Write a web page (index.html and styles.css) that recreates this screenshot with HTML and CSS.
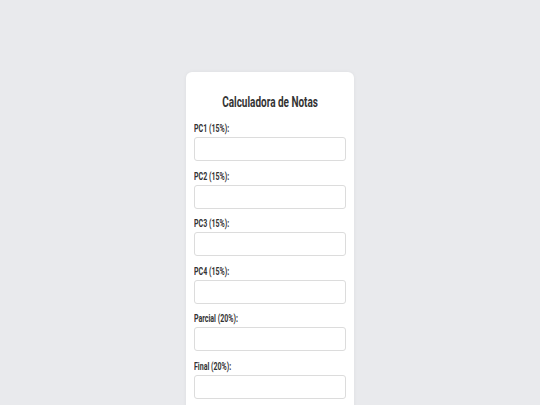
FILE: index.html
```html
<!DOCTYPE html>
<html lang="es">

<head>
    <meta charset="UTF-8">
    <meta name="viewport" content="width=device-width, initial-scale=1.0">
    <title>Calculadora de Notas</title>
    <link rel="stylesheet" href="styles.css">
</head>

<body>
    <div class="calc">
        <h2 class="title"><span>Calculadora de Notas</span></h2>
        <form>
            <label for="pc1"><span>PC1 (15%):</span></label>
            <input type="number" id="pc1">
            <label for="pc2"><span>PC2 (15%):</span></label>
            <input type="number" id="pc2">
            <label for="pc3"><span>PC3 (15%):</span></label>
            <input type="number" id="pc3">
            <label for="pc4"><span>PC4 (15%):</span></label>
            <input type="number" id="pc4">
            <label for="parcial"><span>Parcial (20%):</span></label>
            <input type="number" id="parcial">
            <label for="final"><span>Final (20%):</span></label>
            <input type="number" id="final">
        </form>
    </div>
</body>

</html>
```

FILE: styles.css
```css
* {
    margin: 0;
    padding: 0;
    box-sizing: border-box;
}

body {
    background-color: #e9eaed;
    font-family: Roboto, "Liberation Sans", sans-serif;
    color: #333;
}

.calc {
    width: 168px;
    margin: 72px auto 20px;
    padding: 20px 8px 24px;
    background-color: white;
    border-radius: 6px;
    box-shadow: 0 0 4px rgba(0, 0, 0, 0.05);
}

.title {
    text-align: center;
    font-size: 15px;
    line-height: 20px;
    font-weight: 700;
    margin-bottom: 8px;
}

.title span {
    display: inline-block;
    transform: scaleX(0.665);
    white-space: nowrap;
}

label {
    display: block;
    font-size: 11px;
    line-height: 14px;
    font-weight: 700;
    padding-top: 2px;
    margin-bottom: 1px;
}

label span {
    display: inline-block;
    transform: scaleX(0.64);
    transform-origin: left center;
    white-space: nowrap;
}

input {
    display: block;
    width: 100%;
    height: 24px;
    border: 1px solid #dcdcdc;
    border-radius: 3px;
    background-color: white;
    margin-bottom: 6.6px;
}
```
